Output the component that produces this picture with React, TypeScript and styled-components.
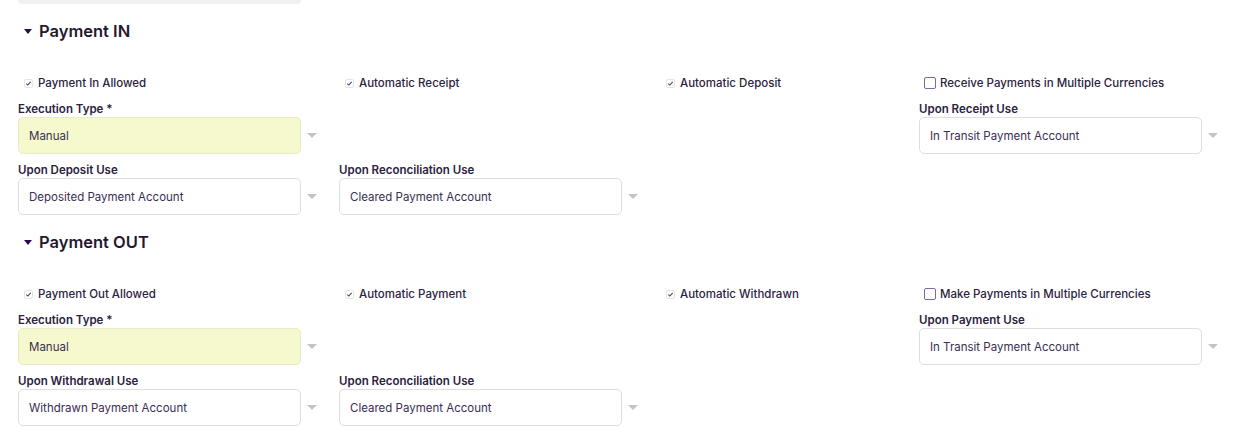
import React from "react";
import styled, { createGlobalStyle } from "styled-components";

const GlobalStyle = createGlobalStyle`
  body {
    margin: 0;
    background: #ffffff;
    font-family: Inter, "Open Sans", sans-serif;
    color: #2b2240;
  }
`;

const Page = styled.div`
  width: 1242px;
  height: 439px;
  overflow: hidden;
  padding-left: 18px;
  box-sizing: border-box;
`;

const TopBar = styled.div`
  width: 283px;
  height: 4px;
  background: #f1f1f1;
  border-radius: 0 0 6px 6px;
`;

const Section = styled.section`
  margin-top: 15px;
`;

const Heading = styled.div`
  display: flex;
  align-items: center;
  height: 24px;
  padding-left: 6px;
  gap: 7px;
  font-size: 16.5px;
  font-weight: 600;
  color: #24182f;
`;

const Caret = styled.span`
  width: 0;
  height: 0;
  border-left: 4.5px solid transparent;
  border-right: 4.5px solid transparent;
  border-top: 5px solid #2d0b4f;
  margin-top: 1px;
`;

const Row = styled.div<{ mt: number }>`
  display: grid;
  grid-template-columns: 321px 321px 259px 1fr;
  margin-top: ${(p) => p.mt}px;
`;

const CheckItem = styled.label<{ col: number }>`
  grid-column: ${(p) => p.col};
  display: flex;
  align-items: center;
  height: 16px;
  padding-left: 6px;
  gap: 5px;
  font-size: 11.5px;
  font-weight: 500;
  color: #2b2240;
`;

const TickBox = styled.span`
  width: 9px;
  height: 9px;
  border: 1px solid #e4e4e4;
  border-radius: 2px;
  display: flex;
  align-items: center;
  justify-content: center;
  box-sizing: border-box;
`;

const EmptyBox = styled.span`
  width: 12px;
  height: 12px;
  border: 1.5px solid #7c6aa6;
  border-radius: 2px;
  box-sizing: border-box;
  margin-left: -1px;
  margin-right: -1px;
`;

const Field = styled.div<{ col: number }>`
  grid-column: ${(p) => p.col};
`;

const Label = styled.div`
  height: 16px;
  line-height: 16px;
  font-size: 11.5px;
  font-weight: 600;
  color: #2b2240;
`;

const SelectLine = styled.div`
  display: flex;
  align-items: center;
`;

const SelectBox = styled.div<{ required?: boolean }>`
  width: 283px;
  height: 37px;
  box-sizing: border-box;
  border: 1px solid ${(p) => (p.required ? "#e8ecc4" : "#dedede")};
  background: ${(p) => (p.required ? "#f6f9cd" : "#ffffff")};
  border-radius: 5px;
  display: flex;
  align-items: center;
  padding-left: 10px;
  font-size: 11.5px;
  color: #3a2e52;
`;

const Arrow = styled.span`
  margin-left: 6px;
  width: 0;
  height: 0;
  border-left: 5px solid transparent;
  border-right: 5px solid transparent;
  border-top: 5px solid #c4c4c4;
`;

const Check = () => (
  <TickBox>
    <svg width="7" height="7" viewBox="0 0 8 8">
      <path d="M1.5 4.2 L3.2 5.8 L6.5 2.2" fill="none" stroke="#4b3a77" strokeWidth="1.2" />
    </svg>
  </TickBox>
);

interface SelectProps {
  label: string;
  value: string;
  required?: boolean;
  col: number;
}

const SelectField = ({ label, value, required, col }: SelectProps) => (
  <Field col={col}>
    <Label>{label}</Label>
    <SelectLine>
      <SelectBox required={required}>{value}</SelectBox>
      <Arrow />
    </SelectLine>
  </Field>
);

interface SectionData {
  title: string;
  checks: string[];
  multi: string;
  upon: string;
  second: string;
  secondValue: string;
}

const sections: SectionData[] = [
  {
    title: "Payment IN",
    checks: ["Payment In Allowed", "Automatic Receipt", "Automatic Deposit"],
    multi: "Receive Payments in Multiple Currencies",
    upon: "Upon Receipt Use",
    second: "Upon Deposit Use",
    secondValue: "Deposited Payment Account",
  },
  {
    title: "Payment OUT",
    checks: ["Payment Out Allowed", "Automatic Payment", "Automatic Withdrawn"],
    multi: "Make Payments in Multiple Currencies",
    upon: "Upon Payment Use",
    second: "Upon Withdrawal Use",
    secondValue: "Withdrawn Payment Account",
  },
];

const App = () => {
  return (
    <>
      <GlobalStyle />
      <Page>
        <TopBar />
        {sections.map((s) => (
          <Section key={s.title}>
            <Heading>
              <Caret />
              {s.title}
            </Heading>
            <Row mt={32}>
              {s.checks.map((c, k) => (
                <CheckItem key={c} col={k + 1}>
                  <Check />
                  {c}
                </CheckItem>
              ))}
              <CheckItem col={4}>
                <EmptyBox />
                {s.multi}
              </CheckItem>
            </Row>
            <Row mt={10}>
              <SelectField col={1} label="Execution Type *" value="Manual" required />
              <SelectField col={4} label={s.upon} value="In Transit Payment Account" />
            </Row>
            <Row mt={8}>
              <SelectField col={1} label={s.second} value={s.secondValue} />
              <SelectField col={2} label="Upon Reconciliation Use" value="Cleared Payment Account" />
            </Row>
          </Section>
        ))}
      </Page>
    </>
  );
};

export default App;
